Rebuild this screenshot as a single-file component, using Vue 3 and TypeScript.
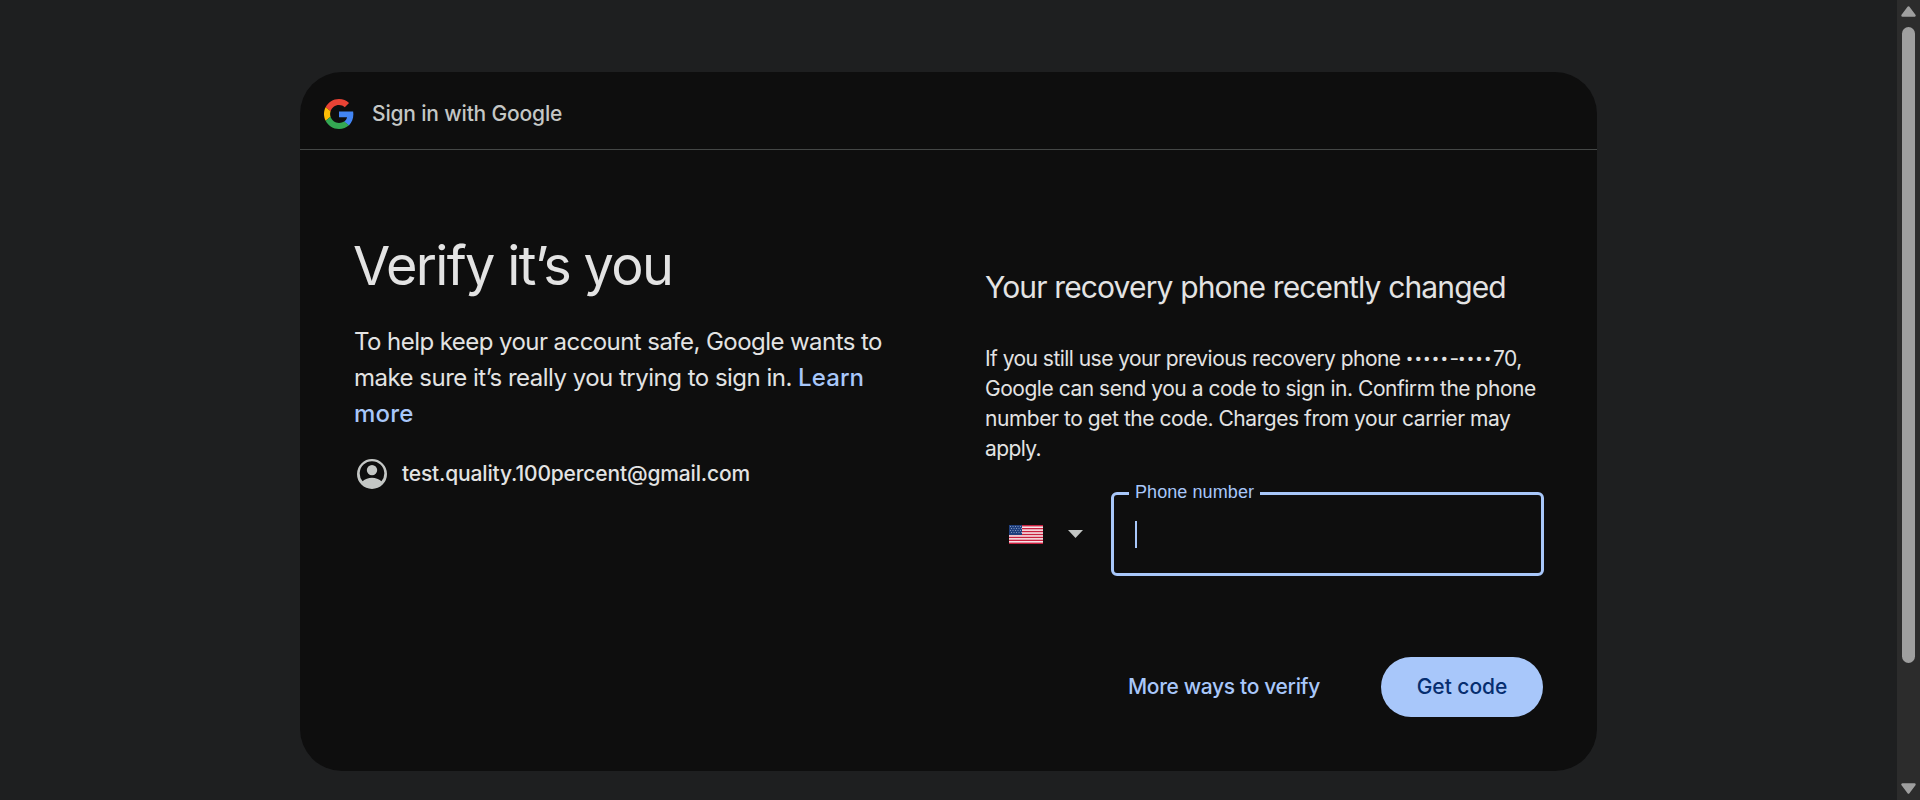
<script setup lang="ts">
const stripes = Array.from({ length: 7 }, (_, i) => i)
</script>

<template>
  <div class="page">
    <div class="viewport">
      <main class="card">
        <header class="brand">
          <svg class="logo" viewBox="0 0 48 48" aria-hidden="true">
            <path fill="#EA4335" d="M24 9.5c3.54 0 6.71 1.22 9.21 3.6l6.85-6.85C35.9 2.38 30.47 0 24 0 14.62 0 6.51 5.38 2.56 13.22l7.98 6.19C12.43 13.72 17.74 9.5 24 9.5z" />
            <path fill="#4285F4" d="M46.98 24.55c0-1.57-.15-3.09-.38-4.55H24v9.02h12.94c-.58 2.96-2.26 5.48-4.78 7.18l7.73 6c4.51-4.18 7.09-10.36 7.09-17.65z" />
            <path fill="#FBBC05" d="M10.53 28.59c-.48-1.45-.76-2.99-.76-4.59s.27-3.14.76-4.59l-7.98-6.19C.92 16.46 0 20.12 0 24c0 3.88.92 7.54 2.56 10.78l7.97-6.19z" />
            <path fill="#34A853" d="M24 48c6.48 0 11.93-2.13 15.89-5.81l-7.73-6c-2.15 1.45-4.92 2.3-8.16 2.3-6.26 0-11.57-4.22-13.47-9.91l-7.98 6.19C6.51 42.62 14.62 48 24 48z" />
          </svg>
          <span class="brand-text">Sign in with Google</span>
        </header>

        <div class="body">
          <section class="left">
            <h1>Verify it’s you</h1>
            <p class="intro">
              <span class="line i1">To help keep your account safe, Google wants to</span>
              <span class="line i2">make sure it’s really you trying to sign in. <a class="learn">Learn</a></span>
              <span class="line"><a class="more">more</a></span>
            </p>
            <div class="account">
              <svg class="avatar" viewBox="2 2 20 20" aria-hidden="true">
                <path fill="#c4c7c5" fill-rule="evenodd" d="M12 2a10 10 0 1 0 0 20 10 10 0 0 0 0-20zM5.7 16.9a8.2 8.2 0 1 1 12.6 0C16.600 15.400 14.400 14.500 12 14.500s-4.600.9-6.300 2.400z" />
                <circle cx="12" cy="9.4" r="3.45" fill="#c4c7c5" />
              </svg>
              <span class="email">test.quality.100percent@gmail.com</span>
            </div>
          </section>

          <section class="right">
            <h2>Your recovery phone recently changed</h2>
            <p class="info">
              <span class="line p1">If you still use your previous recovery phone <span class="mask">•••••</span><span class="dash">-</span><span class="mask">••••</span>70,</span>
              <span class="line p2">Google can send you a code to sign in. Confirm the phone</span>
              <span class="line p3">number to get the code. Charges from your carrier may</span>
              <span class="line p4">apply.</span>
            </p>
            <div class="phone">
              <div class="country">
                <svg class="flag" viewBox="0 0 34 19" aria-hidden="true">
                  <rect width="34" height="19" fill="#fbf4f5" />
                  <rect v-for="i in stripes" :key="i" width="34" height="1.46" :y="i * 2.923" fill="#c8203f" />
                  <rect width="13" height="10" fill="#1f3f7d" />
                  <path d="M1 1.500H13M2 3.500H13M1 5.500H13M2 7.500H13" stroke="#7f95bd" stroke-width="1" stroke-dasharray="1 1.500" />
                </svg>
                <svg class="caret" viewBox="0 0 15 8" aria-hidden="true"><path d="M0 0h15L7.500 8z" fill="#c4c7c5" /></svg>
              </div>
              <div class="field">
                <label>Phone number</label>
                <i class="cursor"></i>
              </div>
            </div>
            <div class="actions">
              <button class="text-btn">More ways to verify</button>
              <button class="fill-btn">Get code</button>
            </div>
          </section>
        </div>
      </main>
    </div>
    <aside class="scrollbar">
      <svg width="15" height="11" viewBox="0 0 15 11"><path d="M7.500 1.500L13.500 9.500H1.500z" fill="#9f9f9f" stroke="#9f9f9f" stroke-width="2.400" stroke-linejoin="round" /></svg>
      <div class="thumb"></div>
      <svg width="15" height="11" viewBox="0 0 15 11"><path d="M1.500 1.500H13.500L7.500 9.500z" fill="#9f9f9f" stroke="#9f9f9f" stroke-width="2.400" stroke-linejoin="round" /></svg>
    </aside>
  </div>
</template>

<style>
body { margin: 0; overflow: hidden; background: #1e1f20; }
</style>

<style scoped>
* { box-sizing: border-box; }
.page {
  display: flex;
  width: 1920px;
  height: 800px;
  background: #1e1f20;
  color: #e3e3e3;
  font-family: Inter, "Liberation Sans", sans-serif;
  font-kerning: normal;
}
.viewport { flex: 1; display: flex; justify-content: center; padding-top: 72px; }
.card { width: 1297px; height: 699px; background: #0e0e0e; border-radius: 42px; overflow: hidden; }
.brand {
  display: flex;
  gap: 18px;
  height: 78px;
  padding: 27px 0 0 24px;
  border-bottom: 1px solid #444746;
}
.logo { width: 30px; height: 30px; }
.brand-text { font-size: 21px; line-height: 30px; font-weight: 500; letter-spacing: -0.17px; color: #c4c7c5; }
.body { display: grid; grid-template-columns: 577px 559px; column-gap: 54px; padding: 0 53px 0 54px; }
.left { padding-top: 83px; }
h1 { margin: 0 0 0 -1px; font-size: 54px; line-height: 66px; font-weight: 400; letter-spacing: -1.63px; white-space: nowrap; }
.intro { margin: 25px 0 0; font-size: 24px; line-height: 36px; }
.line { display: block; white-space: nowrap; }
.i1 { letter-spacing: -0.56px; }
.i2 { letter-spacing: -0.51px; }
.learn, .more { color: #a8c7fa; font-weight: 500; }
.learn { letter-spacing: 0.1px; }
.more { letter-spacing: 0.2px; }
.account { display: flex; align-items: center; gap: 15px; margin-top: 27px; padding-left: 3px; height: 30px; }
.avatar { width: 30px; height: 30px; }
.email { font-size: 21px; line-height: 30px; font-weight: 500; letter-spacing: -0.16px; }
.right { padding-top: 119px; }
h2 { margin: 0; font-size: 30px; line-height: 36px; font-weight: 400; letter-spacing: -0.86px; white-space: nowrap; }
.info { margin: 39px 0 0; font-size: 21px; line-height: 30px; }
.p1 { letter-spacing: -0.54px; }
.p2 { letter-spacing: -0.47px; }
.p3 { letter-spacing: -0.45px; }
.p4 { letter-spacing: -0.6px; }
.mask { font-family: Roboto, sans-serif; letter-spacing: 1.65px; }
.dash { letter-spacing: -1.1px; }
.phone { display: flex; margin-top: 28px; height: 84px; }
.country { display: flex; align-items: center; width: 126px; padding-left: 24px; }
.flag { width: 34px; height: 19px; }
.caret { width: 15px; height: 8px; margin-left: 25px; }
.field { position: relative; width: 433px; height: 84px; border: 3px solid #a8c7fa; border-radius: 6px; }
label {
  position: absolute;
  left: 15px;
  top: -13px;
  width: 131px;
  padding-left: 6px;
  background: #0e0e0e;
  color: #a8c7fa;
  font: 18px/21px "Liberation Sans", Arial, sans-serif;
  letter-spacing: 0.08px;
  white-space: nowrap;
}
.cursor { position: absolute; left: 21px; top: 26px; width: 2px; height: 27px; background: #a8c7fa; }
.actions { display: flex; justify-content: flex-end; gap: 37px; margin-top: 81px; padding-right: 1px; }
button {
  height: 60px;
  padding: 0;
  border: 0;
  border-radius: 30px;
  font: 500 21px/30px Inter, sans-serif;
  white-space: nowrap;
}
.text-btn { width: 240px; background: none; color: #a8c7fa; letter-spacing: -0.34px; }
.fill-btn { width: 162px; background: #a8c7fa; color: #062e6f; letter-spacing: -0.04px; }
.scrollbar {
  display: flex;
  flex-direction: column;
  align-items: center;
  width: 23px;
  height: 800px;
  padding: 6px 0;
  background: #2c2c2c;
}
.scrollbar svg { flex: none; }
.thumb { width: 13px; height: 636px; margin: 10px 0 auto; border-radius: 7px; background: #9f9f9f; }
</style>
